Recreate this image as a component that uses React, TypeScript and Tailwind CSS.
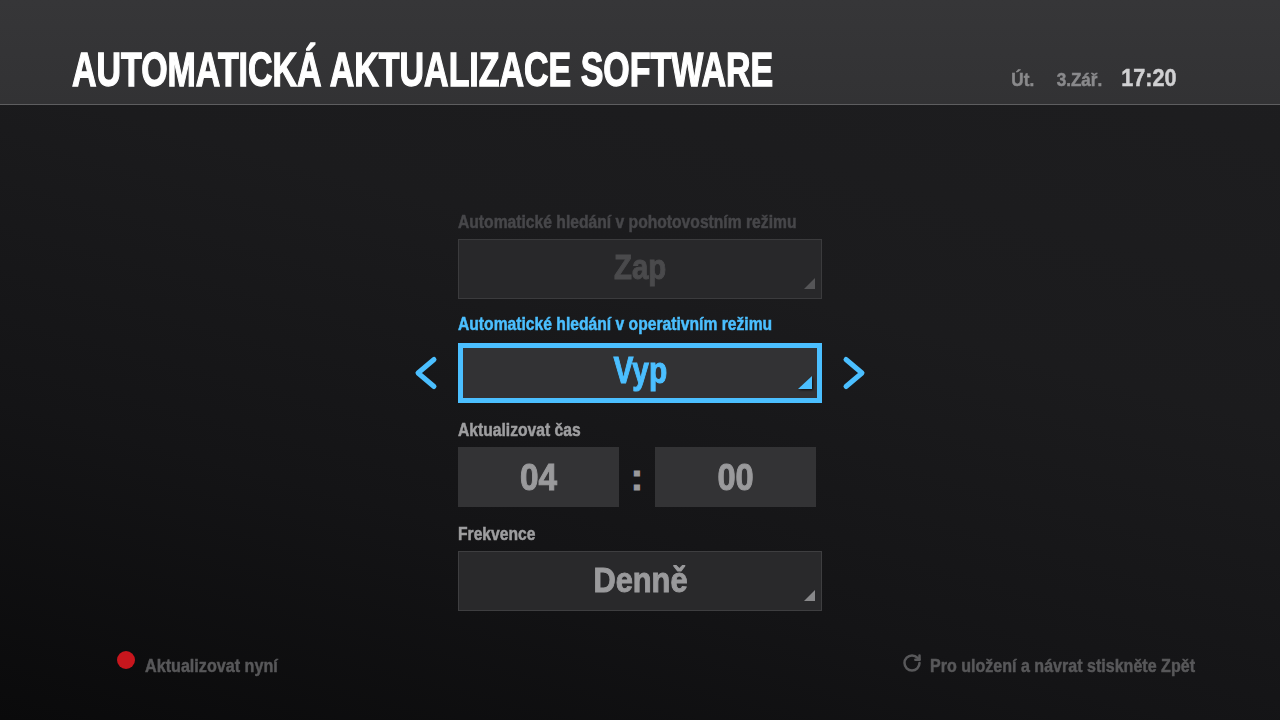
import React from 'react';
import { RotateCw } from 'lucide-react';

// Liberation Sans Bold squeezed horizontally to mimic the condensed TV-UI face
const N: React.FC<{ children: React.ReactNode; className?: string }> = ({ children, className = '' }) => (
  <span className={`inline-block whitespace-nowrap ${className}`}>{children}</span>
);

const Corner: React.FC<{ color: string }> = ({ color }) => (
  <svg className="absolute right-[6px] bottom-[9px]" width="11" height="11" viewBox="0 0 11 11">
    <polygon points="11,0 11,11 0,11" fill={color} />
  </svg>
);

const Chevron: React.FC<{ dir: 'left' | 'right' }> = ({ dir }) => (
  <svg width="24" height="36" viewBox="0 0 24 36" className="text-[#4bbfff]">
    <polyline
      points={dir === 'left' ? '20,4.5 4,18 20,31.5' : '4,4.5 20,18 4,31.5'}
      fill="none"
      stroke="currentColor"
      strokeWidth="5"
      strokeLinecap="round"
      strokeLinejoin="round"
    />
  </svg>
);

const Label: React.FC<{ text: string; tone: string; pb?: string }> = ({ text, tone, pb = 'pb-[8px]' }) => (
  <div className={`h-[44px] flex items-end ${pb} text-[18px] leading-none font-bold ${tone}`}>
    <N className="origin-left scale-x-[0.87] [-webkit-text-stroke:0.5px_currentColor]">{text}</N>
  </div>
);

const value = 'font-bold leading-none [-webkit-text-stroke:1px_currentColor]';

export default function App() {
  return (
    <div className="w-[1280px] h-[720px] flex flex-col overflow-hidden font-['Liberation_Sans',Arial,sans-serif] bg-[linear-gradient(15deg,#0a0a0b_0%,#141416_30%,#1b1b1d_60%,#1e1e20_100%)]">
      <header className="h-[105px] shrink-0 flex items-baseline justify-between pt-[45px] pl-[72px] pr-[104px] bg-[linear-gradient(to_bottom,#363638,#323234)] border-b border-[#5e5e60]">
        <h1 className="w-[705px] text-[49px] leading-none font-bold text-white">
          <N className="origin-left scale-x-[0.693] [-webkit-text-stroke:1.4px_white]">AUTOMATICKÁ AKTUALIZACE SOFTWARE</N>
        </h1>
        <div className="flex items-baseline font-bold leading-none origin-right scale-x-[0.9] [-webkit-text-stroke:0.5px_currentColor]">
          <span className="text-[19px] text-[#8a8a8c]">Út.</span>
          <span className="text-[19px] text-[#8a8a8c] ml-[25px]">3.Zář.</span>
          <span className="text-[24px] text-[#d0d0d2] ml-[21px]">17:20</span>
        </div>
      </header>

      <main className="flex-1 flex justify-center pt-[90px]">
        <div className="w-[364px] flex flex-col">
          <Label text="Automatické hledání v pohotovostním režimu" tone="text-[#47474a]" />
          <div className="relative h-[60px] pb-[5px] border border-[#3b3b3d] bg-[#28282a] flex items-center justify-center">
            <span className={`text-[35px] text-[#4a4a4c] ${value}`}>
              <N className="scale-x-[0.84]">Zap</N>
            </span>
            <Corner color="#555557" />
          </div>

          <Label text="Automatické hledání v operativním režimu" tone="text-[#4bbfff]" pb="pb-[10px]" />
          <div className="relative">
            <div className="absolute left-[-44px] top-[12px]"><Chevron dir="left" /></div>
            <div className="absolute right-[-44px] top-[12px]"><Chevron dir="right" /></div>
            <div className="relative h-[60px] pb-[4px] border-[5px] border-[#4bbfff] bg-[#323234] flex items-center justify-center">
              <span className={`text-[36px] text-[#4bbfff] ${value}`}>
                <N className="scale-x-[0.83]">Vyp</N>
              </span>
              <svg className="absolute right-[5px] bottom-[9px] drop-shadow-[1px_1px_1px_rgba(0,0,0,0.7)]" width="14" height="13" viewBox="0 0 14 13">
                <polygon points="14,0 14,13 0,13" fill="#4bbfff" />
              </svg>
            </div>
          </div>

          <Label text="Aktualizovat čas" tone="text-[#9e9ea0]" />
          <div className="h-[60px] flex">
            <div className="w-[161px] bg-[#333335] flex items-center justify-center">
              <span className={`text-[37px] text-[#9a9a9c] ${value}`}>
                <N className="scale-x-[0.9]">04</N>
              </span>
            </div>
            <div className={`w-[36px] flex items-center justify-center text-[37px] text-[#9a9a9c] ${value}`}>:</div>
            <div className="w-[161px] bg-[#333335] flex items-center justify-center">
              <span className={`text-[37px] text-[#9a9a9c] ${value}`}>
                <N className="scale-x-[0.88]">00</N>
              </span>
            </div>
          </div>

          <Label text="Frekvence" tone="text-[#9e9ea0]" />
          <div className="relative h-[60px] pb-[3px] border border-[#3e3e40] bg-[#29292b] flex items-center justify-center">
            <span className={`text-[35px] text-[#9a9a9c] ${value}`}>
              <N className="scale-x-[0.88]">Denně</N>
            </span>
            <Corner color="#88888a" />
          </div>
        </div>
      </main>

      <footer className="h-[60px] mb-[25px] shrink-0 flex items-center justify-between pl-[117px] pr-[84px] font-bold text-[19px] leading-none text-[#58585a] [-webkit-text-stroke:0.5px_currentColor]">
        <div className="flex items-center">
          <span className="w-[18px] h-[18px] rounded-full bg-[#c8161d] mt-[-10px]" />
          <N className="ml-[10px] origin-left scale-x-[0.85]">Aktualizovat nyní</N>
        </div>
        <div className="flex items-center">
          <RotateCw size={20} strokeWidth={3} className="text-[#58585a] mt-[-4px] mr-[8px] [-webkit-text-stroke:0]" />
          <span className="w-[266px]">
            <N className="origin-left scale-x-[0.845]">Pro uložení a návrat stiskněte Zpět</N>
          </span>
        </div>
      </footer>
    </div>
  );
}
